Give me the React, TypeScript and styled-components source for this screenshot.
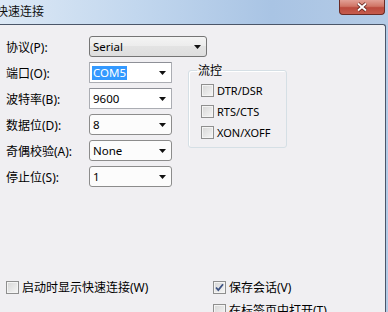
import { FC } from "react"
import styled, { createGlobalStyle, css } from "styled-components"

const GlobalStyle = createGlobalStyle`
  html, body {
    margin: 0;
    padding: 0;
  }
  body {
    font-family: "Noto Sans", "Noto Sans CJK SC", sans-serif;
    font-size: 12px;
    color: #000;
  }
`

type Tone = "button" | "rounded" | "edit"

const Select: FC<{ value: string; width: number; tone: Tone; selected?: boolean }> = ({
  value,
  width,
  tone,
  selected,
}) => {
  return (
    <SelectBox $width={width} $tone={tone}>
      <SelectValue $selected={selected}>{value}</SelectValue>
      <Arrow width="7" height="4" viewBox="0 0 7 4">
        <path d="M0 0 H7 L3.5 4 Z" fill="#111" />
      </Arrow>
    </SelectBox>
  )
}

const Check: FC<{ label: string; checked?: boolean; latin?: boolean }> = ({
  label,
  checked,
  latin,
}) => {
  return (
    <CheckRow>
      <CheckBox>
        {checked && (
          <svg width="11" height="11" viewBox="0 0 11 11">
            <path d="M2 5.5 L4.3 8 L9 2.2" stroke="#3d5283" strokeWidth="1.8" fill="none" />
          </svg>
        )}
      </CheckBox>
      <CheckLabel $latin={latin}>{label}</CheckLabel>
    </CheckRow>
  )
}

const App: FC = () => {
  return (
    <>
      <GlobalStyle />
      <Window>
        <TitleBar>
          <Title>快速连接</Title>
          <CloseButton>
            <svg width="12" height="10" viewBox="0 0 12 10">
              <path d="M2 1.5 L10 8.5 M10 1.5 L2 8.5" stroke="#5a1d16" strokeWidth="3.6" />
              <path d="M2 1.5 L10 8.5 M10 1.5 L2 8.5" stroke="#fff" strokeWidth="2" />
            </svg>
          </CloseButton>
        </TitleBar>
        <Frame>
          <Body>
            <FormRow>
              <Label>协议(P):</Label>
              <Select value="Serial" width={118} tone="button" />
            </FormRow>
            <Middle>
              <LeftCol>
                <FormRow>
                  <Label>端口(O):</Label>
                  <Select value="COM5" width={83} tone="edit" selected />
                </FormRow>
                <FormRow>
                  <Label>波特率(B):</Label>
                  <Select value="9600" width={83} tone="edit" />
                </FormRow>
                <FormRow>
                  <Label>数据位(D):</Label>
                  <Select value="8" width={83} tone="rounded" />
                </FormRow>
                <FormRow>
                  <Label>奇偶校验(A):</Label>
                  <Select value="None" width={83} tone="rounded" />
                </FormRow>
                <FormRow>
                  <Label>停止位(S):</Label>
                  <Select value="1" width={83} tone="rounded" />
                </FormRow>
              </LeftCol>
              <Group>
                <Legend>流控</Legend>
                <GroupList>
                  <Check label="DTR/DSR" latin />
                  <Check label="RTS/CTS" latin />
                  <Check label="XON/XOFF" latin />
                </GroupList>
              </Group>
            </Middle>
            <BottomGrid>
              <Check label="启动时显示快速连接(W)" />
              <Check label="保存会话(V)" checked />
              <span />
              <Check label="在标签页中打开(T)" />
            </BottomGrid>
          </Body>
        </Frame>
      </Window>
    </>
  )
}

export default App

const Window = styled.div`
  width: 388px;
  height: 312px;
  overflow: hidden;
  display: flex;
  flex-direction: column;
  background: linear-gradient(90deg, #dce8f5 0%, #c2d7ee 35%, #a9c4e4 70%, #b4cbe6 100%);
`

const TitleBar = styled.div`
  height: 24px;
  flex: none;
  display: flex;
  justify-content: space-between;
  align-items: flex-start;
  padding-right: 3px;
`

const Title = styled.div`
  margin-left: -4px;
  margin-top: 3px;
  font-family: "Noto Sans CJK SC", sans-serif;
  font-size: 12px;
  line-height: 15px;
  color: #111;
`

const CloseButton = styled.div`
  width: 44px;
  height: 14px;
  display: flex;
  align-items: center;
  justify-content: center;
  border: 1px solid #6a2b25;
  border-top: none;
  border-radius: 0 0 4px 4px;
  background: linear-gradient(#e2a096 0%, #d07566 45%, #bb4a3d 55%, #c9605150 100%), #c45a4c;
`

const Frame = styled.div`
  flex: 1;
  display: flex;
  padding-right: 2px;
`

const Body = styled.div`
  flex: 1;
  background: #f0eff2;
  border-top: 1px solid #4b5669;
  border-right: 1px solid #4b5669;
  border-top-right-radius: 3px;
  padding: 11px 0 0 6px;
`

const FormRow = styled.div`
  height: 21px;
  display: flex;
  align-items: center;
`

const Label = styled.div`
  width: 83px;
  font-size: 12px;
  white-space: nowrap;
`

const toneStyles = {
  button: css`
    border: 1px solid #757575;
    border-radius: 3px;
    background: linear-gradient(#f4f4f4, #ececec 50%, #e3e3e3 50%, #dedede);
  `,
  rounded: css`
    border: 1px solid #8c8c8c;
    border-radius: 3px;
    background: #fcfcfc;
  `,
  edit: css`
    border: 1px solid #abadb3;
    border-top-color: #8e9097;
    border-radius: 1px;
    background: #fff;
  `,
}

const SelectBox = styled.div<{ $width: number; $tone: Tone }>`
  box-sizing: border-box;
  width: ${(p) => p.$width}px;
  height: 21px;
  display: flex;
  align-items: center;
  justify-content: space-between;
  padding: 0 5px 0 2px;
  ${(p) => toneStyles[p.$tone]}
`

const SelectValue = styled.span<{ $selected?: boolean }>`
  font-size: 11.5px;
  line-height: 14px;
  padding: 0 1px;
  ${(p) =>
    p.$selected &&
    css`
      background: #3399ff;
      color: #fff;
    `}
`

const Arrow = styled.svg`
  flex: none;
`

const Middle = styled.div`
  display: flex;
  gap: 16px;
  margin-top: 5px;
`

const LeftCol = styled.div`
  display: flex;
  flex-direction: column;
  gap: 5px;
`

const Group = styled.fieldset`
  box-sizing: border-box;
  width: 99px;
  height: 85px;
  margin: 1px 0 0 0;
  padding: 0 0 0 12px;
  border: 1px solid #d5dfe5;
  border-radius: 3px;
  box-shadow: inset 1px 1px 0 #fff;
`

const Legend = styled.legend`
  margin-left: -4px;
  padding: 0 1px;
  font-family: "Noto Sans CJK SC", sans-serif;
  font-size: 12px;
  line-height: 14px;
`

const GroupList = styled.div`
  display: flex;
  flex-direction: column;
  gap: 8px;
  margin-top: 7px;
`

const CheckRow = styled.div`
  height: 13px;
  display: flex;
  align-items: center;
  white-space: nowrap;
`

const CheckBox = styled.div`
  box-sizing: border-box;
  width: 13px;
  height: 13px;
  flex: none;
  display: flex;
  align-items: center;
  justify-content: center;
  border: 1px solid #8f8f8f;
  background: linear-gradient(135deg, #d6d6d6, #f6f6f6);
  box-shadow: inset 0 0 0 1px #f4f4f4;
`

const CheckLabel = styled.span<{ $latin?: boolean }>`
  margin-left: 3px;
  font-size: ${(p) => (p.$latin ? "11px" : "12px")};
  line-height: 14px;
`

const BottomGrid = styled.div`
  display: grid;
  grid-template-columns: 207px 1fr;
  row-gap: 10px;
  margin-top: 94px;
`
